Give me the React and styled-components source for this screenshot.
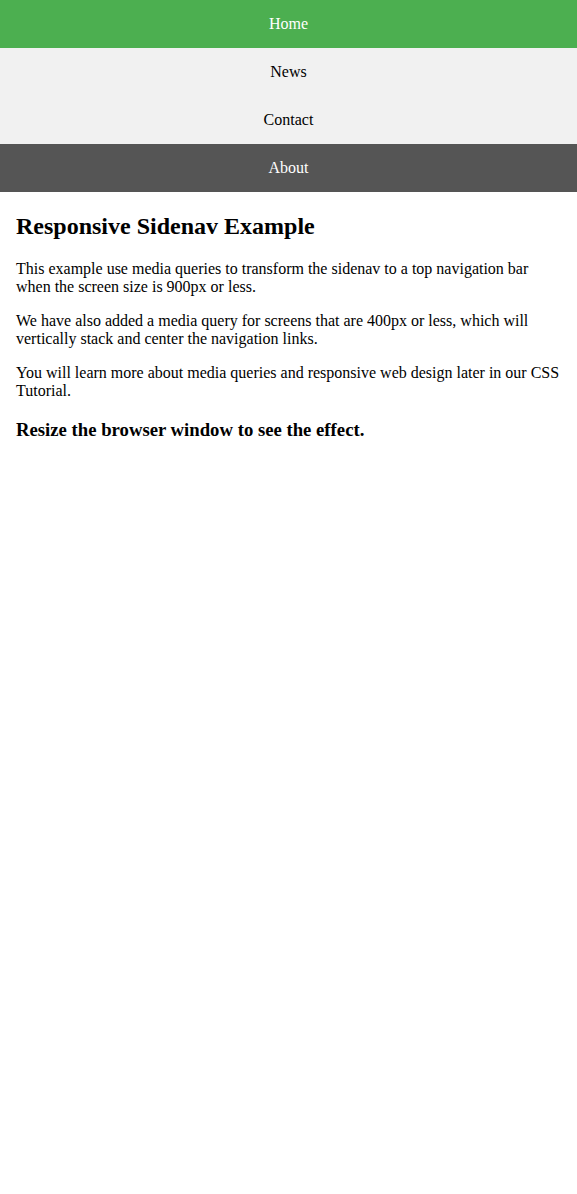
import React from 'react';
import styled, { createGlobalStyle } from 'styled-components';

const Global = createGlobalStyle`
    body{
        margin:0;
        font-family:"Liberation Serif","Times New Roman",serif;
        background:#fff;
        color:#000;
    }
`
const Sidebar = styled.nav`
    width:100%;
    background-color:#f1f1f1;
    display:flex;
    flex-direction:column;
`
const NavLink = styled.a`
    display:block;
    padding:16px;
    line-height:16px;
    font-size:16px;
    text-align:center;
    text-decoration:none;
    color:${p => (p.$active || p.$hover ? 'white' : 'black')};
    background-color:${p => p.$active ? '#4CAF50' : p.$hover ? '#555' : 'transparent'};
`
const Content = styled.div`
    padding:1px 16px;
    h2{ font-size:24px; margin:19.92px 0; }
    p{ font-size:16px; margin:16px 0; line-height:normal; }
    h3{ font-size:18.72px; margin:18.72px 0; }
`

export default function App(){
    const links = [
        { label:'Home', active:true },
        { label:'News' },
        { label:'Contact' },
        { label:'About', hover:true },
    ];
    return(
        <>
            <Global/>
            <Sidebar>
                {links.map(l => (
                    <NavLink key={l.label} href="#" $active={l.active} $hover={l.hover}>{l.label}</NavLink>
                ))}
            </Sidebar>
            <Content>
                <h2>Responsive Sidenav Example</h2>
                <p>This example use media queries to transform the sidenav to a top navigation bar when the screen size is 900px or less.</p>
                <p>We have also added a media query for screens that are 400px or less, which will vertically stack and center the navigation links.</p>
                <p>You will learn more about media queries and responsive web design later in our CSS Tutorial.</p>
                <h3>Resize the browser window to see the effect.</h3>
            </Content>
        </>
    )
}
